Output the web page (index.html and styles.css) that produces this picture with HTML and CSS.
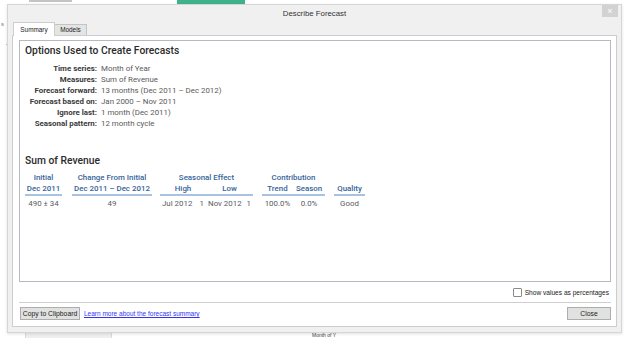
FILE: index.html
```html
<!DOCTYPE html>
<html lang="en">
<head>
    <meta charset="UTF-8">
    <title>Describe Forecast</title>
    <link rel="stylesheet" href="styles.css">
</head>
<body>
    <div class="desk">
        <span class="bit bit-gray"></span>
        <span class="bit bit-green"></span>
        <span class="bit bit-shelf"></span>
        <span class="side-letter side-s">s</span>
        <span class="side-letter side-j">J</span>
        <span class="shelf-label">Month of Y</span>

        <div class="dialog">
            <div class="titlebar">
                <span></span>
                <span class="title">Describe Forecast</span>
                <span class="close-x">&#215;</span>
            </div>
            <div class="tabs">
                <div class="tab active">Summary</div>
                <div class="tab">Models</div>
            </div>
            <div class="panel">
                <div class="summary">
                    <h2>Options Used to Create Forecasts</h2>
                    <dl class="options">
                        <dt>Time series:</dt><dd>Month of Year</dd>
                        <dt>Measures:</dt><dd>Sum of Revenue</dd>
                        <dt>Forecast forward:</dt><dd>13 months (Dec 2011 &#8211; Dec 2012)</dd>
                        <dt>Forecast based on:</dt><dd>Jan 2000 &#8211; Nov 2011</dd>
                        <dt>Ignore last:</dt><dd>1 month (Dec 2011)</dd>
                        <dt>Seasonal pattern:</dt><dd>12 month cycle</dd>
                    </dl>

                    <h2 class="measure">Sum of Revenue</h2>
                    <table class="forecast">
                        <colgroup>
                            <col style="width:37px"><col style="width:10px">
                            <col style="width:80px"><col style="width:8px">
                            <col style="width:46px"><col style="width:47px"><col style="width:9px">
                            <col style="width:31px"><col style="width:32px"><col style="width:9px">
                            <col style="width:31px">
                        </colgroup>
                        <tr class="group">
                            <th>Initial</th><td></td>
                            <th>Change From Initial</th><td></td>
                            <th colspan="2">Seasonal Effect</th><td></td>
                            <th colspan="2">Contribution</th><td></td>
                            <th></th>
                        </tr>
                        <tr class="sub">
                            <th>Dec 2011</th><td></td>
                            <th>Dec 2011 &#8211; Dec 2012</th><td></td>
                            <th>High</th><th>Low</th><td></td>
                            <th>Trend</th><th>Season</th><td></td>
                            <th>Quality</th>
                        </tr>
                        <tr class="values">
                            <td>490 &#177; 34</td><td></td>
                            <td>49</td><td></td>
                            <td><span class="pair"><span>Jul 2012</span><span>1</span></span></td>
                            <td><span class="pair"><span>Nov 2012</span><span>1</span></span></td><td></td>
                            <td>100.0%</td><td>0.0%</td><td></td>
                            <td>Good</td>
                        </tr>
                    </table>
                </div>

                <label class="pct"><span class="box"></span>Show values as percentages</label>

                <div class="footer">
                    <button class="btn copy-btn">Copy to Clipboard</button>
                    <a class="learn" href="#">Learn more about the forecast summary</a>
                    <button class="btn close-btn">Close</button>
                </div>
            </div>
        </div>
    </div>
</body>
</html>
```

FILE: styles.css
```css
body {
    margin: 0;
    background: #ffffff;
    font-family: "Liberation Sans", Arial, sans-serif;
}
.desk {
    position: relative;
    width: 627px;
    height: 338px;
    overflow: hidden;
    box-sizing: border-box;
    padding: 4px 5px 0 7px;
}
.bit {
    position: absolute;
    display: block;
}
.bit-gray {
    left: 29px;
    top: 0;
    width: 43px;
    height: 2px;
    background: #c4c4c4;
}
.bit-green {
    left: 177px;
    top: 0;
    width: 68px;
    height: 4px;
    background: #3fb28c;
}
.bit-shelf {
    left: 25px;
    top: 332px;
    width: 85px;
    height: 8px;
    background: #efefef;
    border: 1px solid #dadada;
}
.side-letter {
    position: absolute;
    font-size: 6px;
    color: #777;
}
.side-s { left: 1px; top: 21px; }
.side-j { left: 6px; top: 40px; }
.shelf-label {
    position: absolute;
    left: 312px;
    top: 333px;
    font-size: 5px;
    line-height: 5px;
    color: #444;
}
.dialog {
    position: relative;
    z-index: 1;
    width: 615px;
    height: 329px;
    box-sizing: border-box;
    display: flex;
    flex-direction: column;
    background: #f0f0f0;
    border: 1px solid #d6d6d6;
    padding-bottom: 5px;
    box-shadow: 0 1px 3px rgba(0, 0, 0, 0.12);
}
.titlebar {
    height: 17px;
    display: grid;
    grid-template-columns: 1fr auto 1fr;
    align-items: center;
}
.title {
    font-size: 7.8px;
    color: #333;
}
.close-x {
    justify-self: end;
    align-self: start;
    width: 16px;
    height: 12px;
    margin-right: 3px;
    background: #d2d2d2;
    color: #fff;
    font-size: 9px;
    line-height: 12px;
    text-align: center;
}
.tabs {
    height: 13px;
    display: flex;
    align-items: flex-end;
    padding-left: 5px;
}
.tab {
    font-size: 6.4px;
    color: #222;
    box-sizing: border-box;
    height: 11px;
    line-height: 10px;
    width: 32px;
    text-align: center;
    background: #e4e4e4;
    border: 1px solid #c4c4c4;
    border-bottom: none;
    border-left: none;
}
.tab.active {
    position: relative;
    z-index: 2;
    width: 42px;
    height: 14px;
    line-height: 13px;
    margin-bottom: -1px;
    background: #fff;
    border-color: #cdcdcd;
    border-left: 1px solid #cdcdcd;
}
.panel {
    flex: 1;
    margin: 0 4px;
    display: flex;
    flex-direction: column;
    background: #fff;
    border: 1px solid #cdcdcd;
    padding: 4px 5px 0 6px;
}
.summary {
    height: 242px;
    box-sizing: border-box;
    border: 1px solid #b8b8c2;
    padding: 3px 5px;
    font-family: Roboto, "Liberation Sans", sans-serif;
    color: #333;
}
.summary h2 {
    margin: 0;
    font-size: 10.3px;
    line-height: 14px;
    font-weight: 500;
    color: #2b2b2b;
}
.options {
    margin: 5px 0 0;
    display: grid;
    grid-template-columns: 72px auto;
    column-gap: 4px;
    font-size: 7.9px;
    line-height: 11px;
    white-space: nowrap;
}
.options dt {
    text-align: right;
    font-weight: 700;
    color: #3a3a3a;
}
.options dd {
    margin: 0;
    color: #5a5a5a;
}
.summary h2.measure {
    margin-top: 25px;
}
.forecast {
    margin-top: 4px;
    table-layout: fixed;
    border-collapse: collapse;
    font-size: 7.9px;
    line-height: 11px;
}
.forecast th,
.forecast td {
    padding: 0;
    text-align: center;
    white-space: nowrap;
}
.forecast th {
    font-weight: 500;
    color: #35649a;
}
.forecast .sub th {
    border-bottom: 2px solid #a9c2e2;
}
.forecast .values td {
    padding-top: 2px;
    color: #5a5a5a;
}
.pair {
    display: flex;
    justify-content: space-between;
    padding: 0 2px;
}
.pct {
    height: 20px;
    display: flex;
    align-items: center;
    justify-content: flex-end;
    padding-right: 2px;
    font-size: 6.6px;
    color: #222;
}
.box {
    width: 7px;
    height: 7px;
    margin-right: 3px;
    border: 1px solid #8a8a8a;
    border-radius: 1px;
    background: #fff;
}
.footer {
    display: flex;
    align-items: center;
    border-top: 1px solid #cfcfcf;
    padding-top: 4px;
}
.btn {
    height: 13px;
    padding: 0;
    font-family: "Liberation Sans", Arial, sans-serif;
    font-size: 6.8px;
    white-space: nowrap;
    color: #222;
    background: #e1e1e1;
    border: 1px solid #adadad;
}
.copy-btn {
    width: 60px;
    margin-left: 1px;
}
.learn {
    margin-left: 4px;
    font-size: 6.5px;
    color: #3434f0;
}
.close-btn {
    width: 44px;
    margin-left: auto;
}
```
